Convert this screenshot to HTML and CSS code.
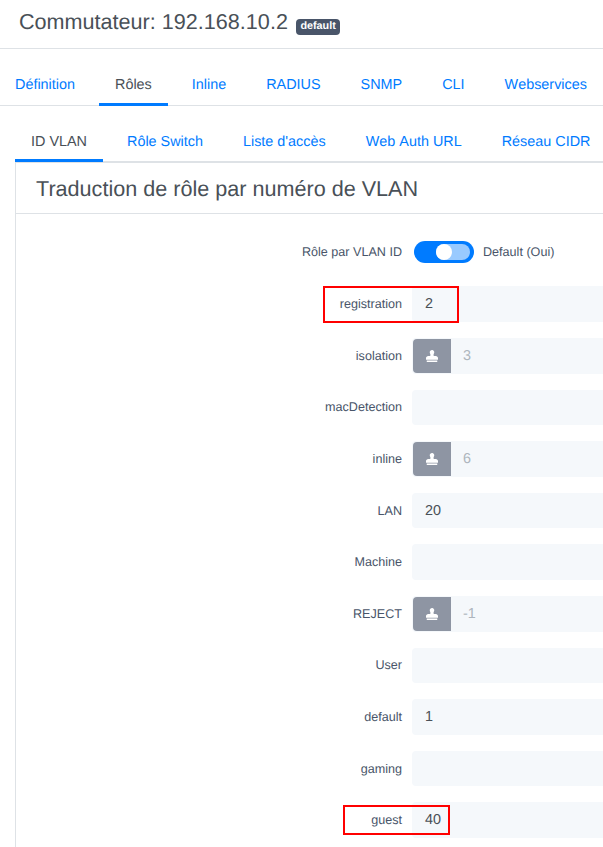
FILE: index.html
```html
<!DOCTYPE html>
<html lang="fr">
<head>
<meta charset="utf-8">
<title>Commutateur</title>
<link rel="stylesheet" href="styles.css">
</head>
<body>
<div class="page">
  <header class="head">
    <h1 class="title">Commutateur: 192.168.10.2 <span class="badge">default</span></h1>
  </header>
  <nav class="tabs main-tabs">
    <a class="tab">Définition</a>
    <a class="tab active">Rôles</a>
    <a class="tab">Inline</a>
    <a class="tab">RADIUS</a>
    <a class="tab">SNMP</a>
    <a class="tab">CLI</a>
    <a class="tab">Webservices</a>
  </nav>
  <nav class="tabs sub-tabs">
    <a class="tab active">ID VLAN</a>
    <a class="tab">Rôle Switch</a>
    <a class="tab">Liste d'accès</a>
    <a class="tab">Web Auth URL</a>
    <a class="tab">Réseau CIDR</a>
  </nav>
  <section class="card">
    <h2 class="card-title">Traduction de rôle par numéro de VLAN</h2>
    <div class="form">
      <div class="row toggle-row">
        <label class="lbl">Rôle par VLAN ID</label>
        <div class="toggle-wrap">
          <span class="toggle"><span class="knob"></span></span>
          <span class="toggle-text">Default (Oui)</span>
        </div>
      </div>
      <div class="row">
        <label class="lbl">registration</label>
        <div class="field"><span class="value">2</span></div>
        <span class="mark mark-reg"></span>
      </div>
      <div class="row">
        <label class="lbl">isolation</label>
        <div class="field inherited">
          <span class="stamp"><svg viewBox="0 0 512 512" width="12" height="12"><path fill="#fff" d="M32 512h448v-64H32v64zm384-256h-66.56c-16.26 0-29.44-13.18-29.44-29.44v-9.46c0-27.37 8.88-53.41 21.46-77.72 9.11-17.61 12.9-38.39 9.05-60.42-6.77-38.78-38.47-70.7-77.26-77.45C212.62-9.04 160 37.33 160 96c0 14.16 3.12 27.54 8.69 39.58C182.02 164.43 192 194.7 192 226.49v.07c0 16.26-13.18 29.44-29.44 29.44H96c-53.02 0-96 42.98-96 96v48c0 8.84 7.16 16 16 16h480c8.84 0 16-7.16 16-16v-48c0-53.02-42.98-96-96-96z"/></svg></span>
          <span class="value muted">3</span>
        </div>
      </div>
      <div class="row">
        <label class="lbl">macDetection</label>
        <div class="field"></div>
      </div>
      <div class="row">
        <label class="lbl">inline</label>
        <div class="field inherited">
          <span class="stamp"><svg viewBox="0 0 512 512" width="12" height="12"><path fill="#fff" d="M32 512h448v-64H32v64zm384-256h-66.56c-16.26 0-29.44-13.18-29.44-29.44v-9.46c0-27.37 8.88-53.41 21.46-77.72 9.11-17.61 12.9-38.39 9.05-60.42-6.77-38.78-38.47-70.7-77.26-77.45C212.62-9.04 160 37.33 160 96c0 14.16 3.12 27.54 8.69 39.58C182.02 164.43 192 194.7 192 226.49v.07c0 16.26-13.18 29.44-29.44 29.44H96c-53.02 0-96 42.98-96 96v48c0 8.84 7.16 16 16 16h480c8.84 0 16-7.16 16-16v-48c0-53.02-42.98-96-96-96z"/></svg></span>
          <span class="value muted">6</span>
        </div>
      </div>
      <div class="row">
        <label class="lbl">LAN</label>
        <div class="field"><span class="value">20</span></div>
      </div>
      <div class="row">
        <label class="lbl">Machine</label>
        <div class="field"></div>
      </div>
      <div class="row">
        <label class="lbl">REJECT</label>
        <div class="field inherited">
          <span class="stamp"><svg viewBox="0 0 512 512" width="12" height="12"><path fill="#fff" d="M32 512h448v-64H32v64zm384-256h-66.56c-16.26 0-29.44-13.18-29.44-29.44v-9.46c0-27.37 8.88-53.41 21.46-77.72 9.11-17.61 12.9-38.39 9.05-60.42-6.77-38.78-38.47-70.7-77.26-77.45C212.62-9.04 160 37.33 160 96c0 14.16 3.12 27.54 8.69 39.58C182.02 164.43 192 194.7 192 226.49v.07c0 16.26-13.18 29.44-29.44 29.44H96c-53.02 0-96 42.98-96 96v48c0 8.84 7.16 16 16 16h480c8.84 0 16-7.16 16-16v-48c0-53.02-42.98-96-96-96z"/></svg></span>
          <span class="value muted">-1</span>
        </div>
      </div>
      <div class="row">
        <label class="lbl">User</label>
        <div class="field"></div>
      </div>
      <div class="row">
        <label class="lbl">default</label>
        <div class="field"><span class="value">1</span></div>
      </div>
      <div class="row">
        <label class="lbl">gaming</label>
        <div class="field"></div>
      </div>
      <div class="row">
        <label class="lbl">guest</label>
        <div class="field"><span class="value">40</span></div>
        <span class="mark mark-guest"></span>
      </div>
    </div>
  </section>
</div>
</body>
</html>
```
FILE: styles.css
```css
* { box-sizing: border-box; }
html, body { margin: 0; height: 100%; overflow: hidden; background: #fff; }
body { font-family: "Liberation Sans", Arial, sans-serif; color: #495057; text-rendering: geometricPrecision; font-kerning: none; }
.page { width: 603px; height: 847px; overflow: hidden; }

.head { height: 49px; padding: 8px 19px 0; border-bottom: 1px solid #dee2e6; }
.title { margin: 0; font-size: 21.6px; line-height: 28px; font-weight: 400; color: #495057; white-space: nowrap; }
.badge { display: inline-block; margin-left: 2px; padding: 2px 4.5px 3px; background: #495569; color: #fff; font-size: 10.8px; line-height: 11px; font-weight: 700; border-radius: 4px; }

.tabs { display: flex; gap: 8px; padding-left: 15px; white-space: nowrap; font-size: 14.4px; line-height: 22px; }
.tab { flex: none; padding: 0 16px; color: #007bff; border-bottom: 3px solid transparent; }
.tab.active { color: #495057; border-bottom-color: #007bff; }

.main-tabs { height: 57px; padding-top: 16px; border-bottom: 1px solid #dee2e6; }
.main-tabs .tab { height: 41px; padding-top: 9px; margin-bottom: -1px; }
.main-tabs .tab:first-child { padding-left: 0; padding-right: 16px; }

.sub-tabs { height: 57px; padding-top: 16px; border-bottom: 2px solid #dee2e6; margin-left: 15px; padding-left: 0; }
.sub-tabs .tab { height: 40px; padding-top: 9px; margin-bottom: -1px; }

.card { margin-left: 15px; border-left: 1px solid #dee2e6; width: 700px; height: 700px; }
.card-title { margin: 0; height: 51px; padding: 12px 20px 0; font-size: 21.6px; line-height: 28px; font-weight: 400; font-kerning: normal; color: #495057; border-bottom: 1px solid #dee2e6; }

.form { padding-top: 20px; }
.row { position: relative; display: grid; grid-template-columns: 386px 1fr; column-gap: 10px; align-items: center; height: 35.6px; margin-bottom: 16px; }
.toggle-row { height: 35px; margin-bottom: 17.4px; padding-top: 1px; }
.lbl { text-align: right; font-size: 12.6px; color: #495569; }
.field { display: flex; align-items: center; height: 100%; background: #f5f8fb; border-radius: 4px; font-size: 14.4px; }
.value { padding-left: 13px; color: #495057; }
.value.muted { padding-left: 12px; color: #adb5bd; }
.inherited { padding: 1px; }
.stamp { display: flex; align-items: center; justify-content: center; width: 38px; height: 100%; background: #8e95a3; border-radius: 4px 0 0 4px; }

.toggle-wrap { display: flex; align-items: center; gap: 9px; padding-left: 2px; }
.toggle { display: block; width: 60px; height: 22px; padding: 3px 2px 3px 22px; background: #007bff; border-radius: 11px; position: relative; }
.knob { display: block; width: 34px; height: 16px; background: #99caff; border-radius: 8px; position: relative; }
.knob::before { content: ""; position: absolute; left: 0; top: 0; width: 16px; height: 16px; background: #fff; border-radius: 50%; }
.toggle-text { font-size: 12.6px; color: #495569; }

.mark { position: absolute; border: 2px solid #f00; pointer-events: none; }
.mark-reg { left: 307px; top: 0; width: 136px; height: 37px; }
.mark-guest { left: 327px; top: 3px; width: 107px; height: 30px; }
```
